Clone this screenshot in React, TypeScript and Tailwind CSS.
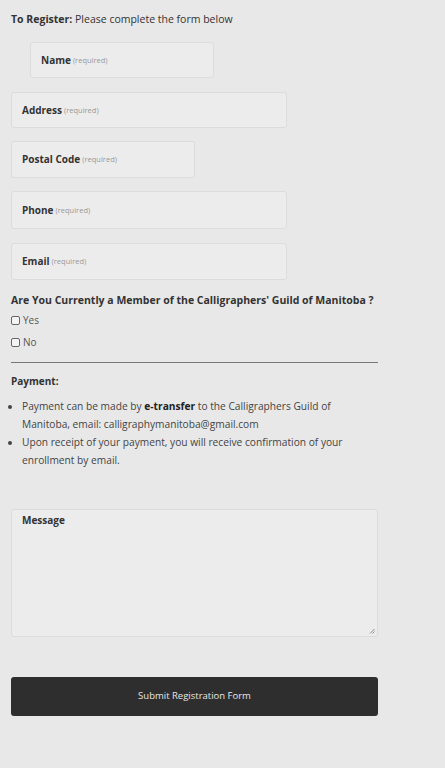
import React from "react";

function Field({ label, className }: { label: string; className: string }) {
  return (
    <div className={`flex items-center rounded-[3px] border border-[#dcdcdc] bg-[#ececec] px-[10px] ${className}`}>
      <span className="text-[10px] font-bold text-[#333]">{label}</span>
      <span className="ml-[2px] mt-[1px] text-[7.5px] text-[#999]">(required)</span>
    </div>
  );
}

function Check({ label }: { label: string }) {
  return (
    <label className="flex items-center gap-[3px] text-[10px] leading-[14px] text-[#555]">
      <span className="inline-block h-[9px] w-[9px] rounded-[2px] border border-[#666] bg-[#f4f4f4]" />
      {label}
    </label>
  );
}

export default function App() {
  return (
    <div className="min-h-[768px] w-full bg-[#e8e8e8] font-['Open_Sans',sans-serif] text-[#333]">
      <div className="w-[378px] pl-[11px] pt-[12px]">
        <p className="text-[10.5px] leading-[14px]">
          <span className="font-bold">To Register:</span> Please complete the form below
        </p>

        <div className="mt-[16px] flex flex-col">
          <Field label="Name" className="ml-[19px] h-[36px] w-[184px]" />
          <Field label="Address" className="mt-[14px] h-[36px] w-[276px]" />
          <Field label="Postal Code" className="mt-[13px] h-[37px] w-[184px]" />
          <Field label="Phone" className="mt-[13px] h-[38px] w-[276px]" />
          <Field label="Email" className="mt-[14px] h-[37px] w-[276px]" />
        </div>

        <p className="mt-[13px] text-[10.5px] font-bold leading-[14px]">
          Are You Currently a Member of the Calligraphers' Guild of Manitoba ?
        </p>
        <div className="mt-[6px] flex flex-col gap-[8px]">
          <Check label="Yes" />
          <Check label="No" />
        </div>

        <hr className="mt-[13px] border-t border-[#777]" />

        <p className="mt-[11px] text-[10px] font-bold leading-[14px]">Payment:</p>
        <ul className="mt-[9px] list-disc pl-[11px] text-[10.2px] leading-[18px] text-[#444]">
          <li>
            Payment can be made by <span className="font-bold text-[#222]">e-transfer</span> to the Calligraphers Guild of Manitoba, email: calligraphymanitoba@gmail.com
          </li>
          <li>Upon receipt of your payment, you will receive confirmation of your enrollment by email.</li>
        </ul>

        <div className="relative mt-[40px] h-[128px] rounded-[3px] border border-[#dcdcdc] bg-[#ececec] px-[10px] pt-[3px]">
          <p className="text-[10px] font-bold leading-[14px] text-[#333]">Message</p>
          {/* resize grip */}
          <svg className="absolute bottom-[2px] right-[2px]" width="6" height="6" viewBox="0 0 6 6">
            <path d="M5.5 1 L1 5.5 M5.5 3.5 L3.5 5.5" stroke="#777" strokeWidth="0.8" />
          </svg>
        </div>

        <button className="mt-[40px] flex h-[39px] w-full items-center justify-center rounded-[3px] bg-[#2e2e2e] text-[9.5px] text-[#e6e6e6]">
          Submit Registration Form
        </button>
      </div>
    </div>
  );
}
